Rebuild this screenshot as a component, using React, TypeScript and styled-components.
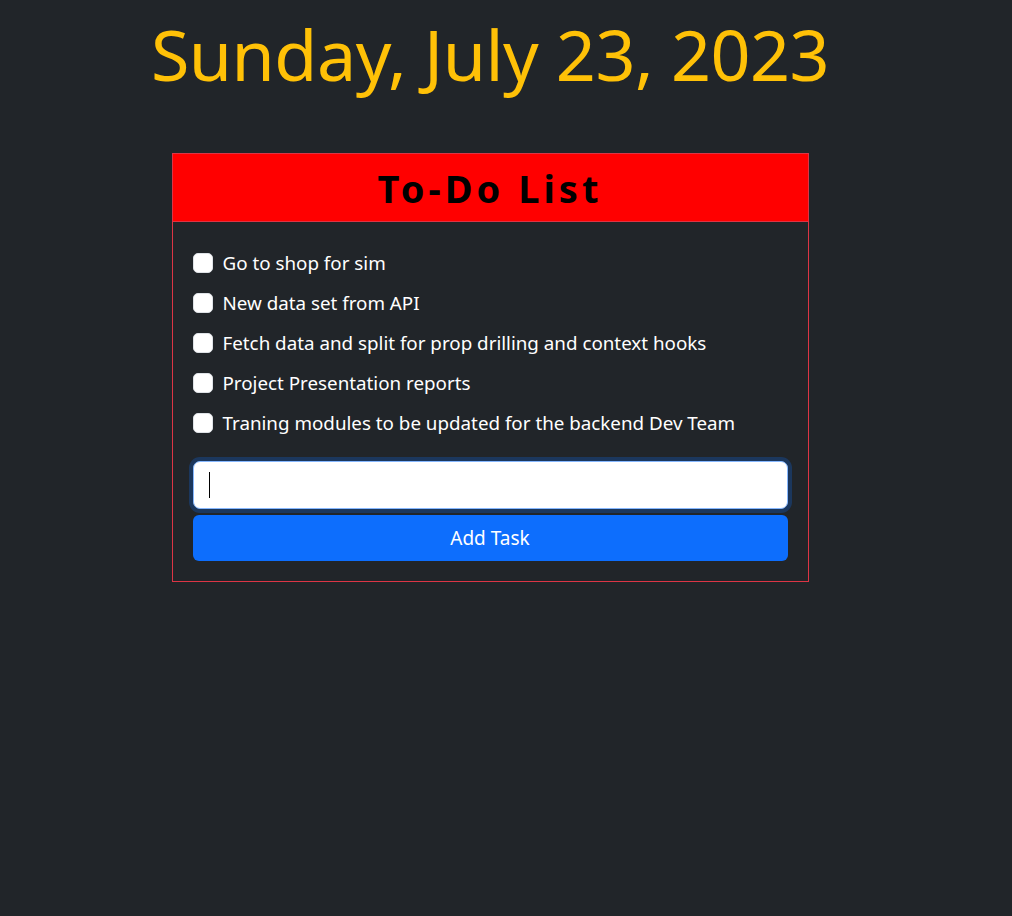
import React, { useState } from "react";
import styled, { createGlobalStyle } from "styled-components";

const Global = createGlobalStyle`
  html, body { margin: 0; padding: 0; background: #212529; }
  body { font-family: "Noto Sans", "Open Sans", sans-serif; color: #dee2e6; }
  * { box-sizing: border-box; }
`;

const Page = styled.div`
  width: 980px;
  min-height: 916px;
  display: flex;
  flex-direction: column;
  align-items: center;
`;

const DateTitle = styled.h1`
  margin: 10px 0 0 0;
  font-size: 70px;
  font-weight: 400;
  line-height: 88px;
  color: #ffc107;
  letter-spacing: -0.5px;
`;

const Card = styled.div`
  margin-top: 55px;
  width: 637px;
  border: 1px solid #dc3545;
`;

const Header = styled.div`
  height: 68px;
  background: #ff0000;
  display: flex;
  align-items: center;
  justify-content: center;
  border-bottom: 1px solid #dc3545;
`;

const HeaderTitle = styled.h2`
  margin: 0;
  font-size: 38px;
  font-weight: 700;
  letter-spacing: 4px;
  color: #000;
`;

const Body = styled.div`
  padding: 21px 20px 20px 20px;
`;

const List = styled.ul`
  list-style: none;
  margin: 0;
  padding: 0;
  display: flex;
  flex-direction: column;
`;

const Item = styled.li`
  height: 40px;
  display: flex;
  align-items: center;
  gap: 10px;
  font-size: 18.8px;
  color: #fff;
`;

const Check = styled.input`
  appearance: none;
  margin: 0;
  width: 20px;
  height: 20px;
  border-radius: 5px;
  background: #fff;
  border: 1px solid #dee2e6;
  flex-shrink: 0;
`;

const Form = styled.div`
  margin-top: 18px;
  display: flex;
  flex-direction: column;
  gap: 6px;
`;

const Input = styled.input`
  display: block;
  height: 48px;
  width: 100%;
  border-radius: 7px;
  border: 1px solid #86b7fe;
  background: #fff;
  outline: none;
  box-shadow: 0 0 0 4px rgba(13, 110, 253, 0.25);
  font-size: 20px;
  padding: 6px 14px;
  font-family: inherit;
`;

const Caret = styled.span`
  display: block;
  width: 1px;
  height: 26px;
  background: #000;
`;

const InputWrap = styled.div`
  position: relative;
`;

const CaretPos = styled.div`
  position: absolute;
  left: 16px;
  top: 11px;
  pointer-events: none;
`;

const Button = styled.button`
  display: block;
  height: 46px;
  width: 100%;
  border: none;
  border-radius: 6px;
  background: #0d6efd;
  color: #fff;
  font-size: 19px;
  font-family: inherit;
  cursor: pointer;
`;

const tasks = [
  "Go to shop for sim",
  "New data set from API",
  "Fetch data and split for prop drilling and context hooks",
  "Project Presentation reports",
  "Traning modules to be updated for the backend Dev Team",
];

export default function App() {
  const [value, setValue] = useState("");
  return (
    <>
      <Global />
      <Page>
        <DateTitle>Sunday, July 23, 2023</DateTitle>
        <Card>
          <Header>
            <HeaderTitle>To-Do List</HeaderTitle>
          </Header>
          <Body>
            <List>
              {tasks.map((t) => (
                <Item key={t}>
                  <Check type="checkbox" />
                  <span>{t}</span>
                </Item>
              ))}
            </List>
            <Form>
              <InputWrap>
                <Input value={value} onChange={(e) => setValue(e.target.value)} />
                <CaretPos>
                  <Caret />
                </CaretPos>
              </InputWrap>
              <Button>Add Task</Button>
            </Form>
          </Body>
        </Card>
      </Page>
    </>
  );
}
